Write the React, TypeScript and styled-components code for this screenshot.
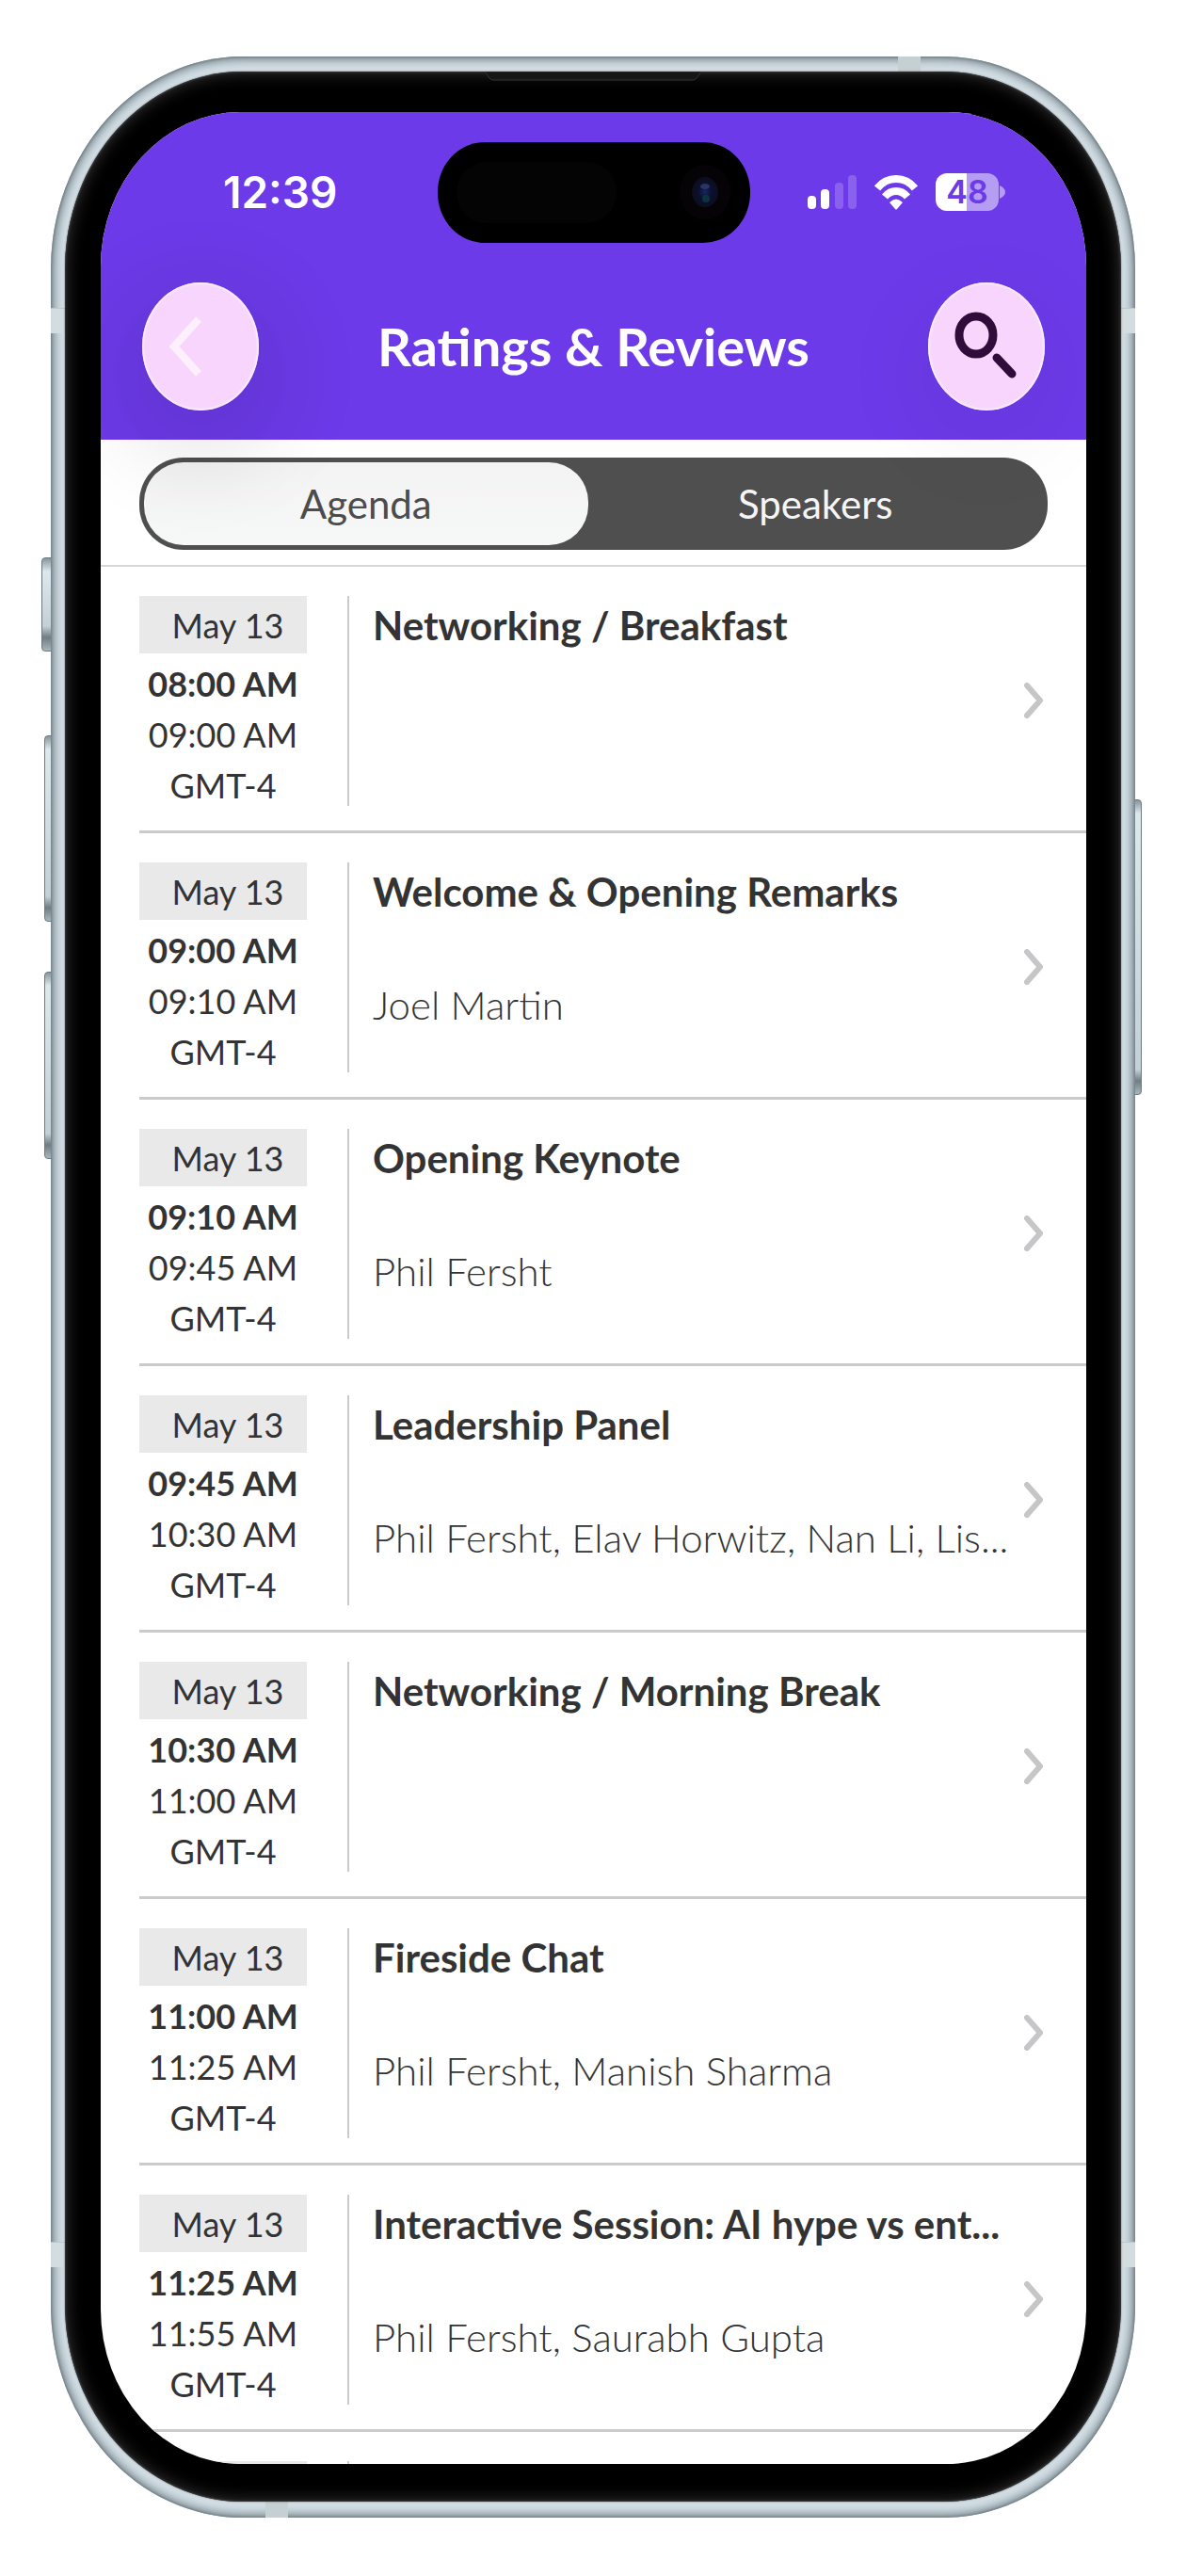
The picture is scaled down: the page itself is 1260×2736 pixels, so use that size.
import { useState } from "react";
import styled, { createGlobalStyle } from "styled-components";

const sessions = [
  { start: '08:00 AM', end: '09:00 AM', title: 'Networking / Breakfast', speakers: '' },
  { start: '09:00 AM', end: '09:10 AM', title: 'Welcome & Opening Remarks', speakers: 'Joel Martin' },
  { start: '09:10 AM', end: '09:45 AM', title: 'Opening Keynote', speakers: 'Phil Fersht' },
  { start: '09:45 AM', end: '10:30 AM', title: 'Leadership Panel', speakers: 'Phil Fersht, Elav Horwitz, Nan Li, Lis...' },
  { start: '10:30 AM', end: '11:00 AM', title: 'Networking / Morning Break', speakers: '' },
  { start: '11:00 AM', end: '11:25 AM', title: 'Fireside Chat', speakers: 'Phil Fersht, Manish Sharma' },
  { start: '11:25 AM', end: '11:55 AM', title: 'Interactive Session: AI hype vs ent...', speakers: 'Phil Fersht, Saurabh Gupta' },
];

const App = () => {
  const [tab, setTab] = useState('Agenda');

  return (
    <Page>
      <GlobalStyle />
      <Phone>
        <SideButton $side="left" $top={532} $height={100} $depth={10} />
        <SideButton $side="left" $top={721} $height={198} $depth={7} />
        <SideButton $side="left" $top={972} $height={199} $depth={7} />
        <SideButton $side="right" $top={789} $height={314} $depth={7} />
        <Metal>
          <SideBand $top={267} />
          <SideBand $top={2321} />
          <EdgeBand $edge="top" />
          <EdgeBand $edge="bottom" />
          <Bezel>
            <Earpiece viewBox="0 0 230 10" aria-hidden="true">
              <path d="M0 0H230L225 7Q224 9 221 9H9Q6 9 5 7Z" fill="#161616" stroke="#343434" />
            </Earpiece>
            <Screen>
              <Header>
                <StatusBar />
                <Nav>
                  <RoundButton type="button" aria-label="Back" $strong>
                    <svg width="124" height="136" viewBox="0 0 124 136" fill="none">
                      <path d="M60 39L34 68L60 97" stroke="#fdf0fd" strokeWidth="8" />
                    </svg>
                  </RoundButton>
                  <Heading>Ratings & Reviews</Heading>
                  <RoundButton type="button" aria-label="Search">
                    <svg width="124" height="136" viewBox="0 0 124 136" fill="none" stroke="#300c3b">
                      <ellipse cx="51" cy="56" rx="18" ry="20" strokeWidth="9" />
                      <path d="M73 80L89 97" strokeWidth="9" strokeLinecap="round" />
                    </svg>
                  </RoundButton>
                </Nav>
              </Header>
              <TabBar>
                <Segmented>
                  {['Agenda', 'Speakers'].map((name) => (
                    <Segment key={name} type="button" $active={tab === name} onClick={() => setTab(name)}>{name}</Segment>
                  ))}
                </Segmented>
              </TabBar>
              <List>
                {sessions.map((session) => (
                  <li key={session.start}>
                    <Row href="#">
                      <When>
                        <DateChip>May 13</DateChip>
                        <Time $bold>{session.start}</Time>
                        <Time>{session.end}</Time>
                        <Time>GMT-4</Time>
                      </When>
                      <Details>
                        <Title>{session.title}</Title>
                        <Speakers>{session.speakers}</Speakers>
                      </Details>
                      <Chevron viewBox="0 0 20 38" fill="none" aria-hidden="true">
                        <path d="M3 3L17 19L3 35" stroke="#c6c6c8" strokeWidth="6" strokeLinecap="round" strokeLinejoin="round" />
                      </Chevron>
                    </Row>
                  </li>
                ))}
                <li>
                  <Row as="div">
                    <When><DateChip /></When>
                    <Details />
                  </Row>
                </li>
              </List>
            </Screen>
          </Bezel>
        </Metal>
      </Phone>
    </Page>
  );
};

const StatusBar = () => {
  return (
    <Status>
      <Clock>12:39</Clock>
      <Island>
        <svg width="332" height="107" viewBox="0 0 332 107" aria-hidden="true">
          <defs>
            <radialGradient id="lens">
              <stop offset="0" stopColor="#16275c" />
              <stop offset="0.5" stopColor="#0b1030" />
              <stop offset="1" stopColor="#0d0d1c" />
            </radialGradient>
          </defs>
          <rect x="20" y="21" width="170" height="65" rx="32" fill="#040404" />
          <ellipse cx="284" cy="53" rx="27" ry="29" fill="#060306" />
          <ellipse cx="284" cy="53" rx="14" ry="16" fill="url(#lens)" />
          <ellipse cx="284" cy="47" rx="5" ry="3" fill="#2a3566" />
          <ellipse cx="285" cy="60" rx="4" ry="4" fill="#0c3340" />
        </svg>
      </Island>
      <Indicators>
        <svg width="52" height="37" viewBox="0 0 52 37" fill="#fff" aria-hidden="true">
          <rect x="0" y="22" width="9" height="14" rx="4" />
          <rect x="14" y="15" width="9" height="21" rx="4" />
          <rect x="29" y="8" width="9" height="28" rx="4" opacity="0.2" />
          <rect x="43" y="0" width="9" height="36" rx="4" opacity="0.2" />
        </svg>
        <svg width="46" height="37" viewBox="0 0 46 37" aria-hidden="true">
          <g fill="none" stroke="#fff">
            <path d="M3 14Q11 4 23 4Q35 4 43 14" strokeWidth="8" />
            <path d="M11 23Q16 17 23 17Q30 17 35 23" strokeWidth="8" />
          </g>
          <path d="M16 29Q23 22 30 29L24 36Q23 37 22 36Z" fill="#fff" />
        </svg>
        <BatteryWrap>
          <Battery>48</Battery>
          <svg width="6" height="14" viewBox="0 0 6 14" aria-hidden="true">
            <path d="M0 0Q6 3 6 7Q6 11 0 14Z" fill="#b59df3" />
          </svg>
        </BatteryWrap>
      </Indicators>
    </Status>
  )
}

export default App;

const GlobalStyle = createGlobalStyle`
  * {
    box-sizing: border-box;
  }
  body {
    margin: 0;
    background: #fff;
    font-family: Lato, "Liberation Sans", sans-serif;
    color: #333;
  }
`

const Page = styled.main`
  display: flex;
  height: 100vh;
  padding: 60px 54px 62px;
`

const Phone = styled.div`
  position: relative;
  display: flex;
  flex: 1;
  min-width: 0;
`

const SideButton = styled.span<{ $side: string; $top: number; $height: number; $depth: number }>`
  position: absolute;
  ${({ $side, $depth }) => `${$side}: -${$depth}px;`}
  top: ${({ $top }) => $top}px;
  width: ${({ $depth }) => $depth + 2}px;
  height: ${({ $height }) => $height}px;
  border: 1px solid #6d7a81;
  border-radius: ${({ $side }) => ($side === 'left' ? '4px 0 0 4px' : '0 4px 4px 0')};
  background: linear-gradient(#87959c, #dde8ec 14px, #c3d0d6 calc(100% - 26px), #6f7d84 calc(100% - 14px), #a9b6bb);
`

const Metal = styled.div`
  position: relative;
  display: flex;
  flex: 1;
  min-width: 0;
  padding: 16px 15px 17px;
  border-radius: 204px / 226px;
  background: #d3dfe5;
  box-shadow: inset 0 0 3px #5c6970, inset 0 0 12px #5c6b73, inset 0 0 14px #8b99a0;
  overflow: hidden;
`

const SideBand = styled.span`
  position: absolute;
  top: ${({ $top }: { $top: number }) => $top}px;
  left: 0;
  right: 0;
  height: 27px;
  background: #d3dcde;
  box-shadow: inset 0 1px 0 #bcc8cc;
`

const EdgeBand = styled.span<{ $edge: 'top' | 'bottom' }>`
  position: absolute;
  ${({ $edge }) => ($edge === 'top' ? 'top: 0; right: 228px;' : 'bottom: 0; left: 228px;')}
  width: 24px;
  height: 17px;
  background: #c5d0d2;
`

const Bezel = styled.div`
  position: relative;
  display: flex;
  flex: 1;
  min-width: 0;
  padding: 43px 37px 40px 38px;
  border-radius: 189px / 210px;
  background: #000;
  box-shadow: 0 0 2px #4a555b, inset 0 0 3px #555, inset 0 0 18px #3c3c3c;
`

const Earpiece = styled.svg`
  position: absolute;
  top: 0;
  left: 50%;
  width: 230px;
  height: 10px;
  margin-left: -115px;
`

const Screen = styled.div`
  display: flex;
  flex: 1;
  flex-direction: column;
  min-width: 0;
  border-radius: 148px / 164px;
  background: #fff;
  overflow: hidden;
`

const Header = styled.header`
  position: relative;
  flex: none;
  background: #6c3ae8;
  color: #fff;
`

const Status = styled.div`
  position: relative;
  display: flex;
  align-items: center;
  justify-content: space-between;
  height: 170px;
  padding: 0 86px 0 130px;
`

const Clock = styled.time`
  font: 600 46px/56px Inter, sans-serif;
`

const Island = styled.div`
  position: absolute;
  top: 32px;
  left: 50%;
  width: 332px;
  height: 107px;
  margin-left: -166px;
  border-radius: 50px / 53px;
  background: #000;
`

const Indicators = styled.div`
  display: flex;
  align-items: center;
  gap: 19px;
`

const BatteryWrap = styled.div`
  display: flex;
  align-items: center;
  gap: 1px;
`

const Battery = styled.span`
  width: 67px;
  height: 40px;
  border-radius: 12px;
  background: linear-gradient(90deg, #fff 49%, #b59df3 49%);
  color: #6c3ae8;
  font: 600 34px/40px Inter, sans-serif;
  text-align: center;
`

const Nav = styled.div`
  display: flex;
  align-items: center;
  justify-content: space-between;
  padding: 11px 44px 31px;
`

const RoundButton = styled.button<{ $strong?: boolean }>`
  flex: none;
  width: 124px;
  height: 136px;
  padding: 0;
  border: 0;
  border-radius: 50%;
  background: #f7d5fc;
  box-shadow: inset 0 0 3px 1px #fff, 0 30px 100px 20px rgba(0, 0, 0, ${({ $strong }) => ($strong ? 0.11 : 0.04)});
`

const Heading = styled.h1`
  margin: 0;
  font-size: 56px;
  font-weight: 700;
  line-height: 72px;
`

const TabBar = styled.div`
  flex: none;
  padding: 19px 41px 16px;
  border-bottom: 2px solid #d6d6d6;
`

const Segmented = styled.div`
  display: flex;
  height: 98px;
  padding: 5px;
  border-radius: 47px;
  background: #4f4f4f;
`

const Segment = styled.button<{ $active: boolean }>`
  flex: ${({ $active }) => ($active ? '0 0 calc(50% - 6px)' : '1')};
  border: 0;
  border-radius: 42px;
  background: ${({ $active }) => ($active ? 'linear-gradient(#f3f3f3, #f6f8f7)' : 'transparent')};
  color: ${({ $active }) => ($active ? '#4c4c4c' : '#f5f5f5')};
  font-family: inherit;
  font-size: 42px;
`

const List = styled.ul`
  flex: 1;
  min-height: 0;
  margin: 0;
  padding: 0 0 0 41px;
  list-style: none;
  overflow: hidden;
`

const Row = styled.a`
  display: flex;
  align-items: flex-start;
  height: 283px;
  padding: 31px 46px 0 0;
  border-bottom: 3px solid #cbcbcb;
  color: #333;
  text-decoration: none;
`

const When = styled.div`
  flex: none;
  width: 178px;
  margin-right: 43px;
  text-align: center;
`

const DateChip = styled.div`
  height: 61px;
  margin-bottom: 5px;
  padding-left: 10px;
  background: #e9e9e9;
  font-size: 36px;
  line-height: 62px;
`

const Time = styled.div<{ $bold?: boolean }>`
  font-size: 36px;
  font-weight: ${({ $bold }) => ($bold ? 700 : 400)};
  line-height: 54px;
`

const Details = styled.div`
  flex: 1;
  min-width: 0;
  height: 223px;
  padding-left: 25px;
  border-left: 2px solid #cbcbcb;
`

const Title = styled.h2`
  margin: 0 0 58px;
  font-size: 42px;
  font-weight: 700;
  line-height: 62px;
  white-space: nowrap;
`

const Speakers = styled.p`
  margin: 0;
  font-size: 42px;
  font-weight: 300;
  line-height: 62px;
  white-space: nowrap;
`

const Chevron = styled.svg`
  flex: none;
  align-self: flex-start;
  width: 20px;
  height: 38px;
  margin: 92px 0 0 16px;
`
